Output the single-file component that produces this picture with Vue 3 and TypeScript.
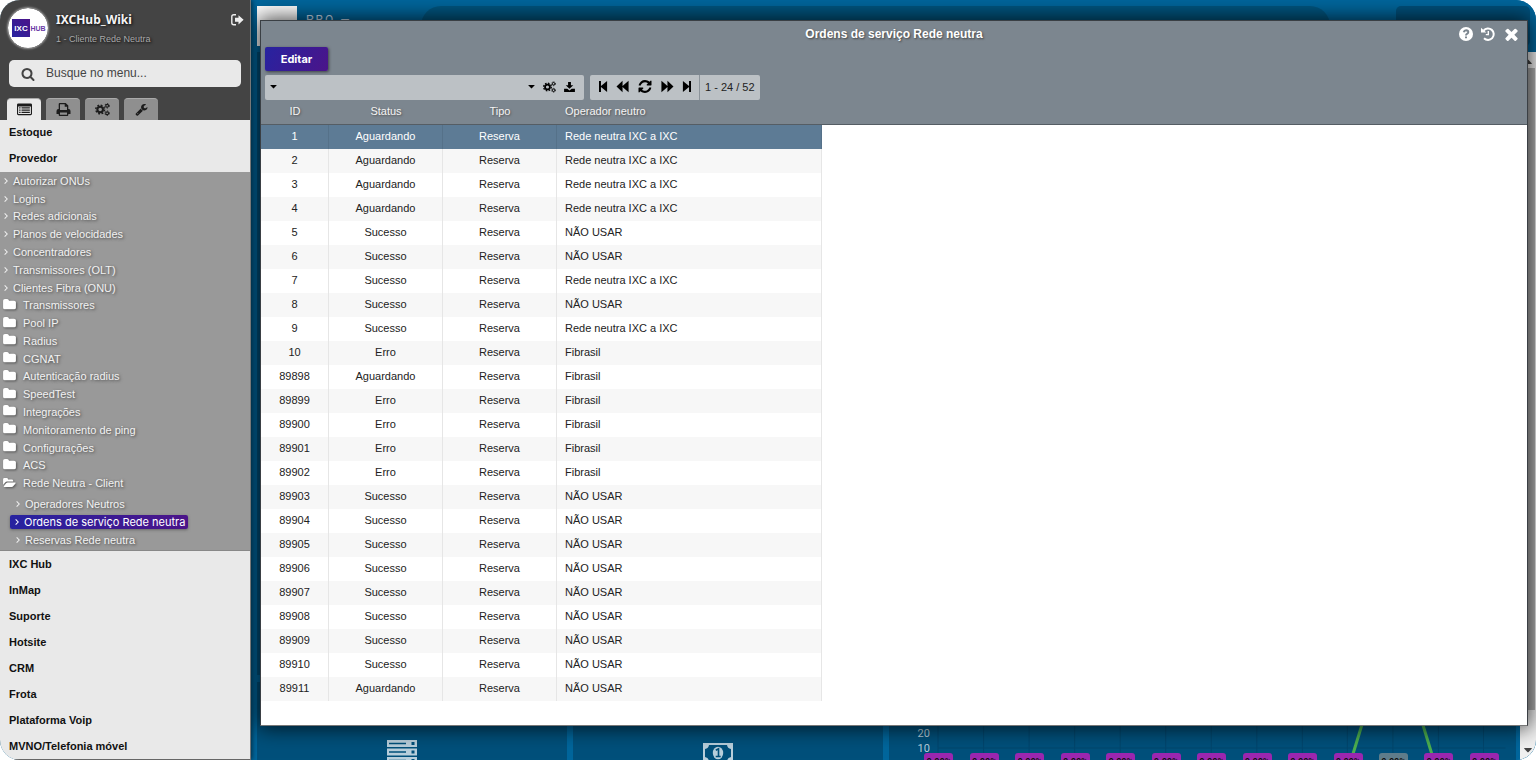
<script setup lang="ts">
import { ref } from 'vue'

interface Order { id: number; status: string; type: string; operator: string }

const IXC = 'Rede neutra IXC a IXC'
const NAO = 'NÃO USAR'
const FIB = 'Fibrasil'
const raw: [number, string, string][] = [
  [1, 'Aguardando', IXC], [2, 'Aguardando', IXC], [3, 'Aguardando', IXC], [4, 'Aguardando', IXC],
  [5, 'Sucesso', NAO], [6, 'Sucesso', NAO], [7, 'Sucesso', IXC], [8, 'Sucesso', NAO],
  [9, 'Sucesso', IXC], [10, 'Erro', FIB], [89898, 'Aguardando', FIB], [89899, 'Erro', FIB],
  [89900, 'Erro', FIB], [89901, 'Erro', FIB], [89902, 'Erro', FIB], [89903, 'Sucesso', NAO],
  [89904, 'Sucesso', NAO], [89905, 'Sucesso', NAO], [89906, 'Sucesso', NAO], [89907, 'Sucesso', NAO],
  [89908, 'Sucesso', NAO], [89909, 'Sucesso', NAO], [89910, 'Sucesso', NAO], [89911, 'Aguardando', NAO],
]
const orders: Order[] = raw.map(([id, status, operator]) => ({ id, status, type: 'Reserva', operator }))
const selected = ref(1)
const search = ref('')
const filter = ref('')

const links = ['Autorizar ONUs', 'Logins', 'Redes adicionais', 'Planos de velocidades', 'Concentradores', 'Transmissores (OLT)', 'Clientes Fibra (ONU)']
const folders = ['Transmissores', 'Pool IP', 'Radius', 'CGNAT', 'Autenticação radius', 'SpeedTest', 'Integrações', 'Monitoramento de ping', 'Configurações', 'ACS', 'Rede Neutra - Client']
const children = ['Operadores Neutros', 'Ordens de serviço Rede neutra', 'Reservas Rede neutra']
const activeChild = 'Ordens de serviço Rede neutra'
const modules = ['IXC Hub', 'InMap', 'Suporte', 'Hotsite', 'CRM', 'Frota', 'Plataforma Voip', 'MVNO/Telefonia móvel']
const tabs = [
  { icon: 'list', label: 'Menu' },
  { icon: 'print', label: 'Relatórios' },
  { icon: 'cogs', label: 'Configurações' },
  { icon: 'wrench', label: 'Ferramentas' },
]
const pager = [
  { icon: 'first', label: 'Primeira página' },
  { icon: 'prev', label: 'Página anterior' },
  { icon: 'refresh', label: 'Atualizar' },
  { icon: 'next', label: 'Próxima página' },
  { icon: 'last', label: 'Última página' },
]
const badges = Array.from({ length: 13 }, (_, i) => ({ value: '0.00%', muted: i === 10 }))
</script>

<template>
  <svg class="defs" aria-hidden="true">
    <symbol id="i-search" viewBox="0 0 1792 1792"><path d="M1216 832q0-185-131.500-316.500t-316.500-131.500-316.500 131.500-131.500 316.500 131.500 316.500 316.500 131.500 316.500-131.500 131.500-316.500zm512 832q0 52-38 90t-90 38q-54 0-90-38l-343-342q-179 124-399 124-143 0-273.500-55.500t-225-150-150-225-55.500-273.500 55.500-273.500 150-225 225-150 273.500-55.500 273.500 55.500 225 150 150 225 55.500 273.500q0 220-124 399l343 343q37 37 37 90z" /></symbol>
    <symbol id="i-folder" viewBox="0 0 14 12"><path d="M0 2Q0 0 2 0H4.500Q6 0 6.500 1.800H12Q14 1.800 14 3.600V9.500Q14 11.200 12 11.200H2Q0 11.200 0 9.500Z" /></symbol>
    <symbol id="i-folder-open" viewBox="0 0 14 12"><path d="M0 8.500V2.500Q0 1 1.500 1H4Q5.200 1 5.500 2.600H9.500Q11 2.600 11 4.200V5H4.500Q3 5 2 6.200Z" /><path d="M.8 10 3.300 6.800Q4 6 5 6H13.200Q14.200 6 13.500 7L11.200 9.800Q10.500 10.800 9.400 10.800H1.200Q.3 10.800 .8 10Z" /></symbol>
    <symbol id="i-list" viewBox="0 0 16 13"><path fill-rule="evenodd" d="M1.500 0H14.500Q16 0 16 1.500V11Q16 12.500 14.500 12.500H1.500Q0 12.500 0 11V1.500Q0 0 1.500 0ZM1.200 3.200V11Q1.200 11.300 1.500 11.300H14.500Q14.800 11.300 14.800 11V3.200Z" /><path d="M2.300 4.200H3.800V5.500H2.300ZM4.800 4.200H13.700V5.500H4.800ZM2.300 6.500H3.800V7.800H2.300ZM4.800 6.500H13.700V7.800H4.800ZM2.300 8.800H3.800V10.100H2.300ZM4.800 8.800H13.700V10.100H4.800Z" /></symbol>
    <symbol id="i-print" viewBox="0 0 14 13"><path fill-rule="evenodd" d="M2.200 6V1Q2.200 0 3.200 0H9.200L11.800 2.600V6H12Q14 6 14 8V11H11.800V12Q11.800 13 10.800 13H3.200Q2.200 13 2.200 12V11H0V8Q0 6 2 6ZM3.500 1.300V7H10.500V3.700H8.200V1.300ZM3.500 9.400V11.700H10.500V9.400Z" /></symbol>
    <symbol id="i-cogs" viewBox="0 0 16 14">
      <g fill="none" stroke="currentColor">
        <circle cx="5.500" cy="7" r="3" stroke-width="2.200" /><circle cx="5.500" cy="7" r="4.700" stroke-width="1.600" stroke-dasharray="2 1.690" />
        <circle cx="13" cy="3" r="1.500" stroke-width="1.200" /><circle cx="13" cy="3" r="2.400" stroke-width="1" stroke-dasharray="1.300 1.210" />
        <circle cx="13" cy="11" r="1.500" stroke-width="1.200" /><circle cx="13" cy="11" r="2.400" stroke-width="1" stroke-dasharray="1.300 1.210" />
      </g>
    </symbol>
    <symbol id="i-wrench" viewBox="0 0 1792 1792"><path d="M448 1472q0-26-19-45t-45-19-45 19-19 45 19 45 45 19 45-19 19-45zm644-420l-682 682q-37 37-90 37-52 0-91-37l-106-108q-38-36-38-90 0-53 38-91l681-681q39 98 114.500 173.500t173.500 114.500zm634-435q0 39-23 106-47 134-164.500 217.500t-258.500 83.500q-185 0-316.500-131.500t-131.500-316.500 131.500-316.500 316.500-131.500q58 0 121.500 16.500t107.500 46.500q16 11 16 28t-16 28l-293 169v224l193 107q5-3 79-48.500t135.500-81 70.500-35.500q15 0 23.500 10t8.500 25z" /></symbol>
    <symbol id="i-signout" viewBox="0 0 13 12"><path d="M5 .8H2.800Q.8 .8 .8 2.800V8.800Q.8 10.800 2.800 10.800H5" fill="none" stroke="currentColor" stroke-width="1.400" /><path d="M4 3.800H7.500V1.200L12.600 5.800 7.500 10.400V7.800H4Z" /></symbol>
    <symbol id="i-caret" viewBox="0 0 8 5"><path d="M.5 0H7.500Q8 .2 7.700 .7L4.400 4.200Q4 4.500 3.600 4.200L.3 .7Q0 .2 .5 0Z" /></symbol>
    <symbol id="i-download" viewBox="0 0 13 12"><path d="M4.800 0H8.200V3.800H11L6.500 8.200 2 3.800H4.800ZM0 8H3.800L6.500 10.300 9.200 8H13V12H0Z" /></symbol>
    <symbol id="i-first" viewBox="0 0 10 14"><path d="M0 1H2.200V6.500L9 .8V13.200L2.200 7.500V13H0Z" /></symbol>
    <symbol id="i-last" viewBox="0 0 10 14"><path d="M10 1H7.800V6.500L1 .8V13.200L7.800 7.500V13H10Z" /></symbol>
    <symbol id="i-prev" viewBox="0 0 14 14"><path d="M0 7 6.500 .8V6.500L13 .8V13.200L6.500 7.500V13.200Z" /></symbol>
    <symbol id="i-next" viewBox="0 0 14 14"><path d="M14 7 7.500 .8V6.500L1 .8V13.200L7.500 7.500V13.200Z" /></symbol>
    <symbol id="i-refresh" viewBox="128 128 1536 1536"><path d="M1639 1056q0 5-1 7-64 268-268 434.500t-478 166.500q-146 0-282.500-55t-243.500-157l-129 129q-19 19-45 19t-45-19-19-45v-448q0-26 19-45t45-19h448q26 0 45 19t19 45-19 45l-137 137q71 66 161 102t187 36q134 0 250-65t186-179q11-17 53-117 8-23 30-23h192q13 0 22.500 9.500t9.500 22.500zm25-800v448q0 26-19 45t-45 19h-448q-26 0-45-19t-19-45 19-45l138-138q-148-137-349-137-134 0-250 65t-186 179q-11 17-53 117-8 23-30 23h-199q-13 0-22.500-9.500t-9.500-22.500v-7q65-268 270-434.500t480-166.500q146 0 284 55.500t245 156.500l130-129q19-19 45-19t45 19 19 45z" /></symbol>
    <symbol id="i-help" viewBox="0 0 14 14"><circle cx="7" cy="7" r="7" /><path d="M4.700 5.200Q5.200 3.300 7.100 3.300 9.300 3.400 9.300 5.100 9.200 6.200 8 6.800 7 7.300 7 8.400" fill="none" stroke="#7c868f" stroke-width="1.900" /><path fill="#7c868f" d="M6 9.400H8V11.300H6Z" /></symbol>
    <symbol id="i-history" viewBox="0 0 14 14"><path d="M2.600 3.600A5.700 5.700 0 1 1 3 11.200" fill="none" stroke="currentColor" stroke-width="2" /><path d="M0 .8 5.300 5.600H0Z" /><path d="M7.300 4V7.600H4.800" fill="none" stroke="currentColor" stroke-width="1.400" /></symbol>
    <symbol id="i-close" viewBox="302 302 1188 1252"><path d="M1490 1322q0 40-28 68l-136 136q-28 28-68 28t-68-28l-294-294-294 294q-28 28-68 28t-68-28l-136-136q-28-28-28-68t28-68l294-294-294-294q-28-28-28-68t28-68l136-136q28-28 68-28t68 28l294 294 294-294q28-28 68-28t68 28l136 136q28 28 28 68t-28 68l-294 294 294 294q28 28 28 68z" /></symbol>
    <symbol id="i-chevron" viewBox="0 0 5 8"><path d="M.8 .8 4 4 .8 7.200" fill="none" stroke="currentColor" stroke-width="1.300" /></symbol>
    <symbol id="i-server" viewBox="0 0 30 24"><path fill-rule="evenodd" d="M0 0H30V7H0ZM2 2.700V4.300H19V2.700ZM24.500 2V5H27.500V2ZM0 8.500H30V15.500H0ZM2 11.200V12.800H19V11.200ZM24.500 10.500V13.500H27.500V10.500ZM0 17H30V24H0ZM2 19.700V21.300H19V19.700ZM24.500 19V22H27.500V19Z" /></symbol>
    <symbol id="i-money" viewBox="0 0 30 20"><path fill-rule="evenodd" d="M0 0H30V20H0ZM6 2Q5.500 5.500 2 6V14Q5.500 14.500 6 18H24Q24.500 14.500 28 14V6Q24.500 5.500 24 2Z" /><ellipse cx="15" cy="10" rx="5.200" ry="6.300" /><path d="M12.800 7.200 15.500 5.800V13.500M12.700 13.500H17.700" fill="none" stroke="#00507b" stroke-width="1.600" /></symbol>
  </svg>

  <div class="app">
    <aside class="sidebar">
      <header class="side-head">
        <div class="profile">
          <svg class="avatar" viewBox="0 0 40 40" role="img" aria-label="IXC Hub">
            <defs><linearGradient id="logo" x1="0" x2="1" y1="1" y2="0"><stop offset="0" stop-color="#2723a0" /><stop offset="1" stop-color="#4b1489" /></linearGradient></defs>
            <circle cx="20" cy="20" r="20" fill="#fff" />
            <rect x="4" y="11" width="18" height="18" fill="url(#logo)" />
            <text x="13" y="23" class="logo-a">IXC</text>
            <text x="30" y="23" class="logo-b">HUB</text>
          </svg>
          <div class="who">
            <strong>IXCHub_Wiki</strong>
            <span>1 - Cliente Rede Neutra</span>
          </div>
          <button class="exit" aria-label="Sair"><svg><use href="#i-signout" /></svg></button>
        </div>
        <label class="search">
          <svg><use href="#i-search" /></svg>
          <input v-model="search" type="text" placeholder="Busque no menu..." aria-label="Busque no menu" />
        </label>
        <div class="tabs">
          <button v-for="(t, i) in tabs" :key="t.icon" class="tab" :class="{ on: i === 0 }" :aria-label="t.label">
            <svg><use :href="'#i-' + t.icon" /></svg>
          </button>
        </div>
      </header>
      <nav class="menu">
        <a class="module" href="#">Estoque</a>
        <a class="module" href="#">Provedor</a>
        <div class="submenu">
          <div class="items">
            <a v-for="l in links" :key="l" href="#" class="item"><svg class="chev"><use href="#i-chevron" /></svg>{{ l }}</a>
            <a v-for="(f, i) in folders" :key="f" href="#" class="item folder">
              <svg class="fold"><use :href="i === folders.length - 1 ? '#i-folder-open' : '#i-folder'" /></svg>{{ f }}
            </a>
          </div>
          <div class="nested">
            <a v-for="c in children" :key="c" href="#" class="child" :class="{ active: c === activeChild }">
              <svg class="chev"><use href="#i-chevron" /></svg>{{ c }}
            </a>
          </div>
        </div>
        <a v-for="m in modules" :key="m" class="module" href="#">{{ m }}</a>
      </nav>
    </aside>

    <main class="desk">
      <header class="topbar">
        <div class="brand"></div>
        <span class="brand-name">PRO —</span>
        <div class="pill"></div>
        <div class="chip"></div>
      </header>
      <div class="board">
        <div class="panels">
          <section class="panel"></section><section class="panel"></section><section class="panel"></section>
          <section class="panel stat"><svg class="server"><use href="#i-server" /></svg></section>
          <section class="panel stat"><svg class="money"><use href="#i-money" /></svg></section>
          <section class="panel chart">
            <svg class="plot" viewBox="0 0 626 78" preserveAspectRatio="none">
              <path d="M49 0V78M94.500 0V78M140 0V78M185.500 0V78M231 0V78M276.500 0V78M322 0V78M367.500 0V78M413 0V78M458 0V78M503.500 0V78M549 0V78M594 0V78M49 66H616" class="grid" />
              <path d="M463 74 474 38M543 74 532 38" class="line" />
            </svg>
            <div class="axis"><span>20</span><span>10</span></div>
            <div class="badges"><span v-for="(b, i) in badges" :key="i" :class="{ muted: b.muted }">{{ b.value }}</span></div>
          </section>
        </div>
        <div class="scroll">
          <svg><use href="#i-caret" transform="rotate(180 4 2.500)" /></svg>
          <div class="thumb"></div>
          <svg><use href="#i-caret" /></svg>
        </div>
      </div>

      <section class="window" role="dialog" aria-label="Ordens de serviço Rede neutra">
        <header class="win-head">
          <h1>Ordens de serviço Rede neutra</h1>
          <div class="win-actions">
            <button aria-label="Ajuda"><svg><use href="#i-help" /></svg></button>
            <button aria-label="Histórico"><svg><use href="#i-history" /></svg></button>
            <button class="close" aria-label="Fechar"><svg><use href="#i-close" /></svg></button>
          </div>
        </header>
        <div class="actions"><button class="edit">Editar</button></div>
        <div class="toolbar">
          <div class="group filter">
            <button aria-label="Campo"><svg class="caret"><use href="#i-caret" /></svg></button>
            <input v-model="filter" type="text" aria-label="Filtro" />
            <button aria-label="Opções"><svg class="caret"><use href="#i-caret" /></svg></button>
            <button aria-label="Configurar"><svg class="ic"><use href="#i-cogs" /></svg></button>
            <button aria-label="Exportar"><svg class="ic dl"><use href="#i-download" /></svg></button>
          </div>
          <div class="group pager">
            <button v-for="p in pager" :key="p.icon" :aria-label="p.label" :class="p.icon"><svg><use :href="'#i-' + p.icon" /></svg></button>
            <span class="range">1 - 24 / 52</span>
          </div>
        </div>
        <div class="data">
          <table>
            <colgroup><col class="c-id" /><col class="c-mid" /><col class="c-mid" /><col class="c-op" /></colgroup>
            <thead><tr><th>ID</th><th>Status</th><th>Tipo</th><th>Operador neutro</th></tr></thead>
            <tbody>
              <tr v-for="o in orders" :key="o.id" :class="{ sel: o.id === selected }" @click="selected = o.id">
                <td>{{ o.id }}</td><td>{{ o.status }}</td><td>{{ o.type }}</td><td>{{ o.operator }}</td>
              </tr>
            </tbody>
          </table>
        </div>
      </section>
    </main>
  </div>
</template>

<style>
body { background: #fff; }
</style>

<style scoped>
* { box-sizing: border-box; }
.defs { position: absolute; width: 0; height: 0; }
svg { display: block; fill: currentColor; flex: none; }
button { border: 0; padding: 0; background: none; color: inherit; font: inherit; cursor: pointer; display: flex; align-items: center; justify-content: center; }
a { color: inherit; text-decoration: none; }
input { border: 0; outline: 0; background: none; padding: 0; min-width: 0; font: inherit; color: inherit; }

.app { display: flex; height: 100vh; overflow: hidden; border-radius: 20px; background: #00669c; font: 11px "Liberation Sans", Arial, sans-serif; }

.sidebar { width: 251px; flex: none; display: flex; flex-direction: column; background: #e9e9e9; border-right: 1px solid #777; border-bottom: 1px solid #666; box-shadow: 1px 0 5px rgba(0, 0, 0, .6); z-index: 1; }
.side-head { background: #444; color: #fff; height: 120px; flex: none; }
.profile { display: flex; align-items: flex-start; height: 60px; padding: 8px 6px 0 8px; }
.avatar { width: 40px; height: 40px; border-radius: 50%; box-shadow: 0 0 2px 1px #999; }
.logo-a { font: bold 8px "Liberation Sans", Arial, sans-serif; fill: #fff; text-anchor: middle; }
.logo-b { font: bold 7px "Liberation Sans", Arial, sans-serif; fill: #6a3aa6; text-anchor: middle; }
.who { display: flex; flex-direction: column; gap: 6px; margin: 4px 0 0 8px; flex: 1; text-shadow: 1px 1px 3px #000; }
.who strong { font: bold 12px/15px "Noto Sans", sans-serif; color: #f4f4f4; }
.who span { font-size: 9px; line-height: 12px; color: #aaa; }
.exit { margin-top: 6px; color: #eee; }
.exit svg { width: 13px; height: 12px; }
.search { display: flex; align-items: center; gap: 11px; height: 27px; margin: 0 9px; padding: 0 12px; border-radius: 5px; background: #e9e9e9; color: #444; }
.search svg { width: 14px; height: 14px; }
.search input { flex: 1; font-size: 12px; height: 18px; margin-bottom: 2px; }
.search input::placeholder { color: #444; opacity: 1; }
.tabs { display: flex; gap: 5px; padding: 11px 0 0 7px; }
.tab { width: 34px; height: 22px; border-radius: 4px 4px 0 0; background: #8f8f8f; color: #1c1c1c; border-top: 1px solid #aaa; }
.tab.on { background: #e9e9e9; }
.tab svg { width: 15px; height: 13px; }

.menu { flex: 1; min-height: 0; overflow: hidden; }
.module { display: flex; align-items: center; height: 26px; padding-left: 9px; font-weight: bold; color: #111; }
.module:nth-child(-n+2) { padding-bottom: 2px; }
.submenu { background: #999; color: #f2f2f2; padding-bottom: 3px; border-bottom: 1px solid #888; text-shadow: 1px 1px 3px #444; }
.items { display: grid; grid-auto-rows: 1fr; height: 320px; }
.item { display: flex; align-items: center; gap: 5px; padding-left: 4px; }
.item.folder { gap: 7px; }
.chev { width: 4px; height: 8px; }
.fold { width: 13px; height: 11px; margin: 0 0 2px -1px; color: #fff; filter: drop-shadow(1px 1px 1px #555); }
.item.folder { padding-left: 4px; }
.nested { padding: 5px 0 0 10px; display: flex; flex-direction: column; gap: 4px; align-items: flex-start; }
.child { display: flex; align-items: center; gap: 5px; height: 14px; padding: 0 3px 0 6px; border-radius: 2px; }
.child.active { padding-left: 5px; background: linear-gradient(90deg, #2723a0, #4b1489); color: #fff; font-family: Inter, sans-serif; box-shadow: 0 1px 3px #666; text-shadow: none; }

.desk { flex: 1; min-width: 0; position: relative; display: flex; flex-direction: column; background: #00669c; }
.topbar { display: flex; height: 52px; padding: 6px; flex: none; align-items: flex-start; }
.brand { width: 40px; height: 40px; background: #fff; }
.brand-name { width: 124px; padding: 6px 0 0 9px; font: 12px/16px Roboto, sans-serif; letter-spacing: 2px; color: #cde; }
.pill { flex: 1; height: 40px; border-radius: 20px; background: #00557f; margin-right: 66px; }
.chip { width: 134px; height: 40px; border-radius: 5px; background: #00507b; }
.board { flex: 1; min-height: 0; display: flex; }
.panels { flex: 1; display: grid; grid-template: 1fr 78px / 310fr 310fr 626fr; gap: 7px 6px; padding: 0 4px 0 6px; }
.panel { background: #00507b; }
.stat { display: flex; justify-content: center; padding: 58px 20px 0 0; color: #b8cfdc; overflow: hidden; }
.server { width: 30px; height: 24px; }
.money { width: 30px; height: 20px; margin-top: 3px; }
.chart { position: relative; overflow: hidden; }
.plot { position: absolute; inset: 0; width: 100%; height: 78px; fill: none; }
.grid { stroke: #00466d; stroke-width: 1; }
.line { stroke: #4caf50; stroke-width: 3; }
.axis { display: flex; flex-direction: column; padding: 44px 0 0 28px; font: 11px/15px Roboto, sans-serif; color: #b8cfdc; }
.badges { position: absolute; left: 35px; right: 17px; top: 71px; display: flex; justify-content: space-between; }
.badges span { width: 29px; height: 16px; padding-top: 3px; border-radius: 3px; background: #9c27b0; color: #111; text-align: center; font: bold 9px/13px Roboto, sans-serif; }
.badges .muted { background: #607d8b; }
.scroll { width: 16px; display: flex; flex-direction: column; align-items: center; background: #f1f1f1; color: #444; padding: 7px 0; gap: 4px; }
.scroll svg { width: 8px; height: 5px; }
.thumb { flex: 1; width: 14px; background: #b0b0b0; margin-bottom: 34px; }

.window { position: absolute; left: 9px; right: 8px; top: 20px; bottom: 34px; display: flex; flex-direction: column; background: #7c868f; border: 1px solid #3a3f44; border-bottom-color: #777; box-shadow: 0 0 20px 2px rgba(0, 0, 0, .75); overflow: hidden; }
.win-head { display: grid; grid-template-columns: 1fr auto 1fr; align-items: center; height: 26px; padding: 0 9px; color: #fff; flex: none; }
.win-head h1 { grid-column: 2; margin: 0; font-size: 12px; line-height: 16px; text-shadow: 1px 1px 2px #444; }
.win-actions { display: flex; justify-content: flex-end; align-items: center; gap: 8px; }
.win-actions svg { width: 14px; height: 14px; }
.win-actions .close { margin-left: 2px; }
.win-actions .close svg { width: 13px; height: 13px; }
.actions { padding: 0 4px; height: 28px; flex: none; }
.edit { width: 63px; height: 24px; border-radius: 2px; color: #fff; font: bold 11px Inter, sans-serif; background: linear-gradient(120deg, #2723a0, #4b1489); box-shadow: 1px 1px 3px rgba(0, 0, 0, .5); }
.toolbar { display: flex; gap: 6px; padding: 0 4px; flex: none; color: #000; }
.group { display: flex; align-items: center; height: 25px; padding-bottom: 2px; border-radius: 2px; background: #bcc1c5; }
.filter { width: 319px; gap: 8px; padding-left: 5px; padding-right: 9px; }
.filter input { flex: 1; height: 20px; }
.caret { width: 7px; height: 4px; }
.ic { width: 13px; height: 12px; }
.ic.dl { width: 11px; height: 10px; }
.pager { padding-left: 9px; }
.pager button svg { width: 14px; height: 13px; }
.pager .first svg, .pager .last svg { width: 9px; }
.pager .prev, .pager .last { margin-left: 8px; }
.pager .refresh, .pager .next { margin-left: 8px; }
.range { height: 25px; margin: 2px 0 0 8px; display: flex; align-items: center; padding: 0 5px 2px; border-left: 1px solid #8c949b; color: #222; }
.data { flex: 1; min-height: 0; overflow: hidden; background: linear-gradient(#7c868f 0 24px, #555d64 24px 25px, #fff 25px); }
table { border-collapse: separate; border-spacing: 0; table-layout: fixed; width: 561px; }
.c-id { width: 68px; } .c-mid { width: 114px; } .c-op { width: 265px; }
th { height: 25px; padding: 0 0 3px; font-weight: normal; color: #f4f4f4; text-shadow: 1px 1px 2px #555; }
td { height: 24px; padding: 0 0 2px; text-align: center; color: #222; border-right: 1px solid #e6e6e6; }
th:last-child, td:last-child { text-align: left; padding-left: 8px; }
tbody tr:nth-child(even) { background: #f7f7f7; }
tbody tr.sel { background: #5d7b95; }
.sel td { color: #fff; border-right-color: #557189; }
</style>
